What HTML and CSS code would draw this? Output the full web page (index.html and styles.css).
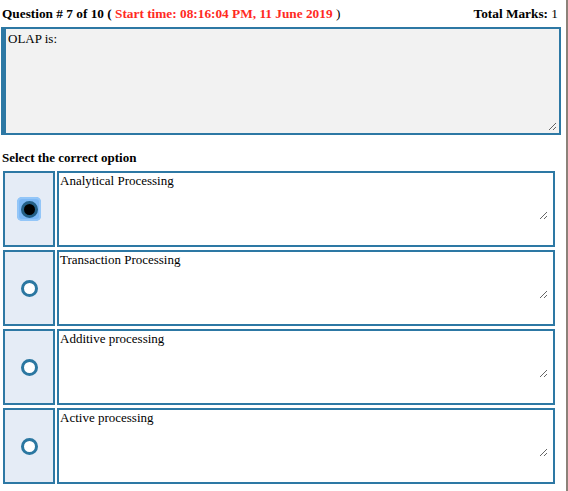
FILE: index.html
```html
<!DOCTYPE html>
<html lang="en">
<head>
<meta charset="UTF-8" />
<title>Quiz</title>
<link rel="stylesheet" href="styles.css">
</head>
<body>
<div class="frame">
  <div class="quiz">
    <!-- Header -->
    <div class="head">
      <div class="q-num">Question # 7 of 10 ( <span class="start">Start time: 08:16:04 PM, 11 June 2019</span> <span class="plain">)</span></div>
      <div class="marks">Total Marks: <span class="plain">1</span></div>
    </div>

    <div class="question">
      <textarea readonly>OLAP is:</textarea>
    </div>

    <h4 class="select-title">Select the correct option</h4>

    <!-- Options -->
    <div class="options">
      <div class="option">
        <div class="pick"><span class="ring"><input type="radio" name="ans" checked></span></div>
        <div class="answer"><textarea readonly>Analytical Processing</textarea></div>
      </div>
      <div class="option">
        <div class="pick"><input type="radio" name="ans"></div>
        <div class="answer"><textarea readonly>Transaction Processing</textarea></div>
      </div>
      <div class="option">
        <div class="pick"><input type="radio" name="ans"></div>
        <div class="answer"><textarea readonly>Additive processing</textarea></div>
      </div>
      <div class="option">
        <div class="pick"><input type="radio" name="ans"></div>
        <div class="answer"><textarea readonly>Active processing</textarea></div>
      </div>
    </div>
  </div>
</div>
</body>
</html>
```
FILE: styles.css
```css
* {
  margin: 0; padding: 0; box-sizing: border-box;
  font-family: 'Liberation Serif', 'Times New Roman', serif;
}
body {
  background: #fff;
  color: #000;
  font-size: 13px;
}
.frame {
  width: 568px;
  min-height: 491px;
  border-right: 2px solid #8c8279;
}
.quiz {
  width: 562px;
  padding-left: 1px;
}
.head {
  display: flex;
  justify-content: space-between;
  align-items: baseline;
  padding: 6px 4px 6px 1px;
  font-weight: 700;
  font-size: 13.3px;
  line-height: 15px;
}
.start {
  color: #ff2a1f;
}
.plain {
  font-weight: 400;
}
textarea {
  display: block;
  width: 100%;
  font-size: 13px;
  line-height: 15px;
  color: #000;
  background: transparent;
  border: none;
  outline: none;
  padding: 0 1px;
}
.question {
  width: 560px;
  height: 108px;
  background: #f2f2f2;
  border: 2px solid #2d78a4;
  border-left: 5px solid #2d78a4;
  padding: 2px 2px 2px 1px;
}
.question textarea {
  height: 100px;
}
.select-title {
  font-size: 13px;
  line-height: 15px;
  margin: 15px 0 6px 1px;
}
.options {
  display: flex;
  flex-direction: column;
  gap: 3px;
  padding-left: 2px;
}
.option {
  display: flex;
  gap: 2px;
  height: 76px;
}
.pick {
  width: 52px;
  background: #e5ecf6;
  border: 2px solid #2d78a4;
  display: flex;
  align-items: center;
  justify-content: center;
}
.answer {
  width: 498px;
  background: #fff;
  border: 2px solid #2d78a4;
  padding: 0 5px 0 0;
}
.answer textarea {
  height: 47px;
}
input[type=radio] {
  appearance: none;
  width: 17px;
  height: 17px;
  border: 3.5px solid #2b77a1;
  border-radius: 50%;
  background: #fff;
  margin: 0;
}
.ring {
  width: 24px;
  height: 24px;
  border-radius: 5px;
  background: #7db8f5;
  box-shadow: inset 0 0 0 2px #93c6f8;
  display: flex;
  align-items: center;
  justify-content: center;
}
.ring input[type=radio] {
  width: 17px;
  height: 17px;
  border: 3px solid #235f86;
  background: #000;
}
```
